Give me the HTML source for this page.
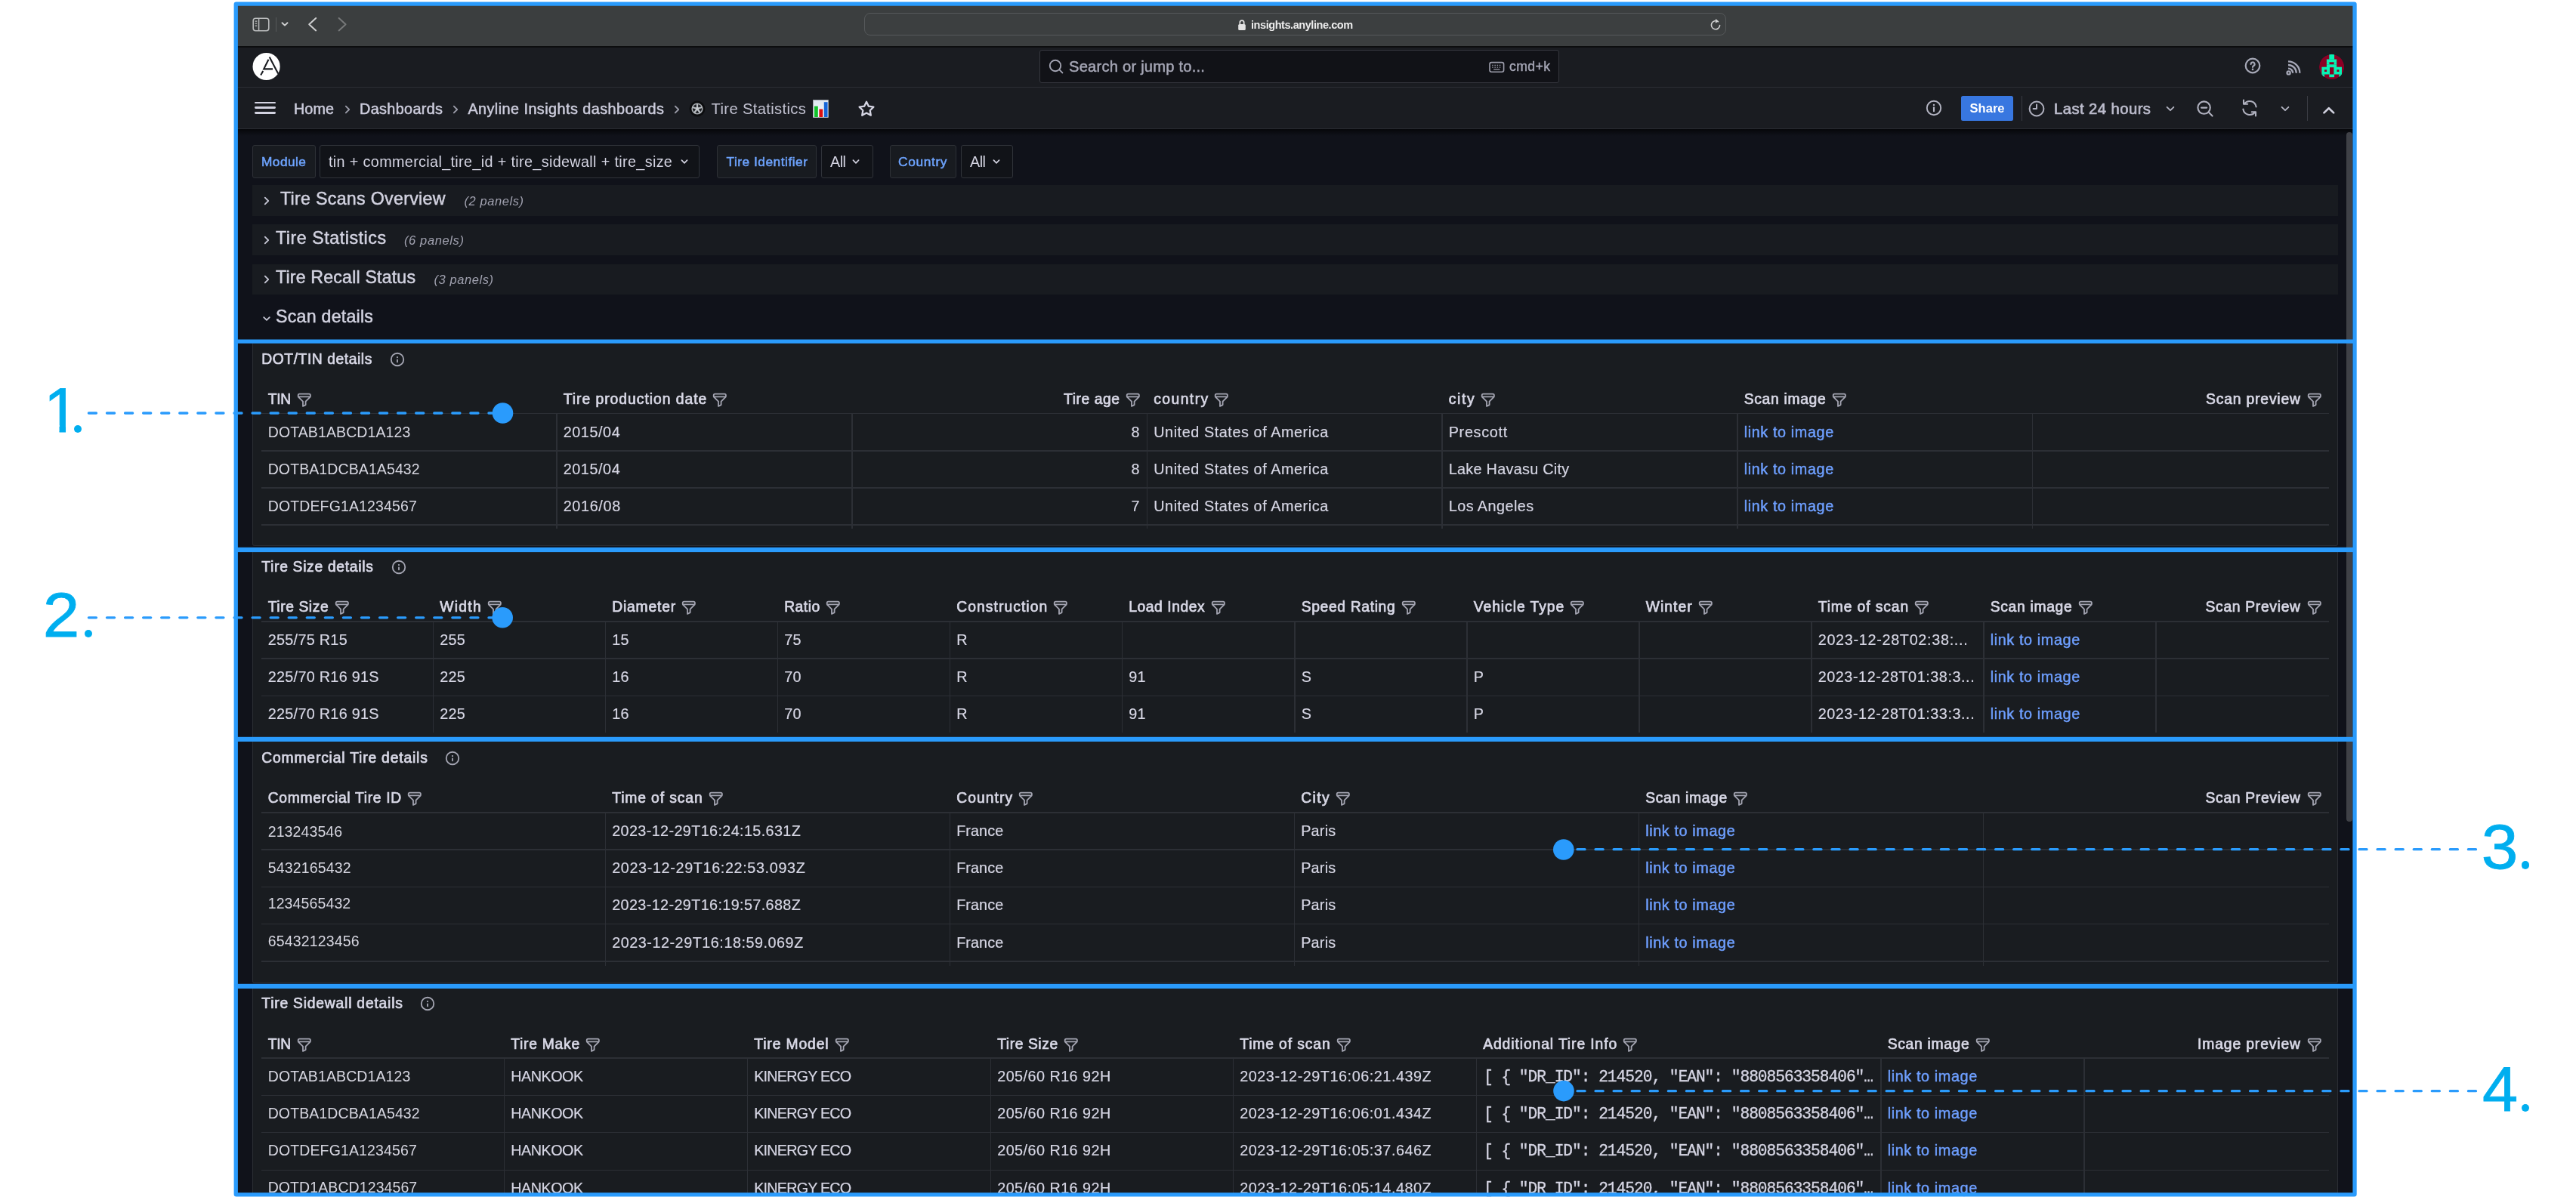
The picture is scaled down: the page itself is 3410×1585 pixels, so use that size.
<!DOCTYPE html>
<html lang="en"><head><meta charset="utf-8"><title>Tire Statistics - Anyline Insights</title>
<style>
html,body{margin:0;padding:0;background:#fff}
body{width:3410px;height:1585px;position:relative;overflow:hidden;font-family:'Liberation Sans', sans-serif}
#stage{position:absolute;left:0;top:0;width:3410px;height:1585px;overflow:hidden;will-change:transform;-webkit-font-smoothing:antialiased}
#stage>div,#stage>svg,#stage>span{position:absolute;display:block}
#stage>span{white-space:pre}
</style></head><body><div id="stage">
<div style="left:312px;top:5px;width:2805px;height:1577px;background:#10121a;"></div>
<div style="left:312px;top:5px;width:2805px;height:56px;background:#3b3e3f;"></div>
<div style="left:312px;top:61px;width:2805px;height:1.5px;background:#0c0d0e;"></div>
<div style="left:312px;top:62.5px;width:2805px;height:108px;background:#1a1c21;"></div>
<div style="left:312px;top:114.5px;width:2805px;height:1.3px;background:#2c2e34;"></div>
<div style="left:312px;top:170px;width:2805px;height:1.3px;background:#2a2c32;"></div>
<div style="left:312px;top:171.3px;width:2805px;height:9px;background:linear-gradient(#06070a,#10121a);"></div>
<div style="left:1144px;top:17px;width:1141px;height:30px;background:#3c3f40;border:1px solid #56595b;border-radius:8px;box-sizing:border-box"></div>
<svg style="left:1637px;top:24px;" width="14" height="18" viewBox="0 0 14 18"><rect x="2.2" y="8" width="9.6" height="8" rx="1.6" fill="#e4e4e4"/><path d="M4.3 8.5V5.8a2.7 2.7 0 0 1 5.4 0V8.5" fill="none" stroke="#e4e4e4" stroke-width="1.7"/></svg>
<svg style="left:2261px;top:23px;" width="20" height="20" viewBox="0 0 20 20"><path d="M15.6 10.6a5.6 5.6 0 1 1-2.2-4.9" fill="none" stroke="#d0d1d2" stroke-width="1.6" stroke-linecap="round"/><path d="M10.2 1.8l3.9 3.6-4.3 2.2z" fill="#d0d1d2"/></svg>
<svg style="left:333px;top:22px;" width="26" height="22" viewBox="0 0 26 22"><rect x="2.2" y="2.2" width="20.6" height="16.6" rx="3.2" fill="none" stroke="#b9bbbc" stroke-width="1.6"/><path d="M9.6 2.5v16" stroke="#b9bbbc" stroke-width="1.5"/><path d="M4.6 6.2h2.6M4.6 9.2h2.6M4.6 12.2h2.6" stroke="#b9bbbc" stroke-width="1.2"/></svg>
<div style="left:364.5px;top:23px;width:1px;height:19px;background:#55585a;"></div>
<svg style="left:370px;top:26px;" width="14" height="12" viewBox="0 0 14 12"><path d="M3.5 4.2l3.5 3.4 3.5-3.4" fill="none" stroke="#cfd0d1" stroke-width="1.9" stroke-linecap="round" stroke-linejoin="round"/></svg>
<svg style="left:404px;top:20px;" width="20" height="24" viewBox="0 0 20 24"><path d="M14.2 4l-9 8.2 9 8.2" fill="none" stroke="#cfd0d1" stroke-width="2" stroke-linecap="round" stroke-linejoin="round"/></svg>
<svg style="left:443px;top:20px;" width="20" height="24" viewBox="0 0 20 24"><path d="M5.6 4l9 8.2-9 8.2" fill="none" stroke="#77797a" stroke-width="2" stroke-linecap="round" stroke-linejoin="round"/></svg>
<svg style="left:334px;top:69px;" width="38" height="38" viewBox="0 0 38 38"><circle cx="18.6" cy="19" r="18.1" fill="#fff"/><g fill="none" stroke="#1a1c21" stroke-width="2.1" stroke-linecap="butt"><path d="M22.7 6.4L34.2 28.6"/><path d="M21.5 9.8L15.2 22.4H27"/><path d="M14.2 25L11.2 30.6"/></g></svg>
<div style="left:1376px;top:66px;width:688px;height:44px;background:#111217;border:1px solid #35373e;border-radius:3px;box-sizing:border-box"></div>
<svg style="left:1386px;top:76px;" width="24" height="24" viewBox="0 0 24 24"><circle cx="11" cy="11" r="7.2" fill="none" stroke="#a3a4b3" stroke-width="1.9"/><path d="M16.4 16.4l4 4" stroke="#a3a4b3" stroke-width="1.9" stroke-linecap="round"/></svg>
<svg style="left:1970px;top:78.6px;" width="24" height="20" viewBox="0 0 24 20"><rect x="2" y="3.6" width="18.6" height="12.6" rx="2.4" fill="none" stroke="#9d9eac" stroke-width="1.6"/><path d="M5.2 7.4h1.5M8.4 7.4h1.5M11.6 7.4h1.5M14.8 7.4h1.5M5.2 10.1h1.5M8.4 10.1h1.5M11.6 10.1h1.5M14.8 10.1h1.5M7.2 12.9h8.2" stroke="#9d9eac" stroke-width="1.4"/></svg>
<svg style="left:2969.8px;top:75.2px;" width="24" height="24" viewBox="0 0 24 24"><circle cx="12" cy="12" r="9.3" fill="none" stroke="#a6a8b7" stroke-width="2.2"/><path d="M9.6 9.9a2.5 2.5 0 1 1 3.5 2.3c-.8.35-1.1.8-1.1 1.7" fill="none" stroke="#a6a8b7" stroke-width="2.1" stroke-linecap="round"/><circle cx="12" cy="16.9" r="1.3" fill="#a6a8b7"/></svg>
<svg style="left:3024.8px;top:76.5px;" width="24" height="24" viewBox="0 0 24 24"><circle cx="4.6" cy="19.4" r="2.1" fill="none" stroke="#a6a8b7" stroke-width="2.2"/><path d="M4 13.6a6.2 6.2 0 0 1 6.2 6.2M4 9A10.8 10.8 0 0 1 14.8 19.8M4 4.4A15.4 15.4 0 0 1 19.4 19.8" fill="none" stroke="#a6a8b7" stroke-width="2.3" stroke-linecap="butt"/></svg>
<svg style="left:3069.7px;top:71.7px;" width="33.2" height="33.2" viewBox="0 0 33.2 33.2"><clipPath id="avc"><circle cx="16.6" cy="16.6" r="16.6"/></clipPath><g clip-path="url(#avc)"><circle cx="16.6" cy="16.6" r="16.6" fill="#8b0025"/><rect x="13.3" y="0" width="6.80" height="6.70" fill="#06f3b4"/><rect x="9.9" y="6.5" width="13.30" height="3.80" fill="#06f3b4"/><rect x="9.9" y="10.1" width="3.60" height="3.40" fill="#06f3b4"/><rect x="19.6" y="10.1" width="3.60" height="3.40" fill="#06f3b4"/><rect x="9.9" y="13.3" width="13.30" height="3.70" fill="#06f3b4"/><rect x="3.4" y="16.7" width="26.60" height="9.80" fill="#06f3b4"/><rect x="3.4" y="26.3" width="3.60" height="4.70" fill="#06f3b4"/><rect x="26.4" y="26.3" width="3.60" height="4.70" fill="#06f3b4"/><rect x="13.3" y="26.3" width="6.80" height="3.90" fill="#06f3b4"/><rect x="7.0" y="20.3" width="3.10" height="2.70" fill="#8b0025"/><rect x="23.5" y="20.3" width="2.90" height="2.70" fill="#8b0025"/><rect x="14.0" y="17.2" width="5.40" height="9.20" fill="#8b0025"/></g></svg>
<div style="left:337px;top:134.6px;width:27.5px;height:2.8px;background:#d2d2e0;border-radius:1.4px"></div>
<div style="left:337px;top:141.4px;width:27.5px;height:2.8px;background:#d2d2e0;border-radius:1.4px"></div>
<div style="left:337px;top:148.2px;width:27.5px;height:2.8px;background:#d2d2e0;border-radius:1.4px"></div>
<svg style="left:453.6px;top:137px;" width="12" height="16" viewBox="0 0 12 16"><path d="M3.8 3.6l4.4 4.4-4.4 4.4" fill="none" stroke="#9b9ca9" stroke-width="1.8" stroke-linecap="round" stroke-linejoin="round"/></svg>
<svg style="left:597px;top:137px;" width="12" height="16" viewBox="0 0 12 16"><path d="M3.8 3.6l4.4 4.4-4.4 4.4" fill="none" stroke="#9b9ca9" stroke-width="1.8" stroke-linecap="round" stroke-linejoin="round"/></svg>
<svg style="left:889.7px;top:137px;" width="12" height="16" viewBox="0 0 12 16"><path d="M3.8 3.6l4.4 4.4-4.4 4.4" fill="none" stroke="#9b9ca9" stroke-width="1.8" stroke-linecap="round" stroke-linejoin="round"/></svg>
<svg style="left:911.5px;top:133px;" width="22" height="22" viewBox="0 0 22 22"><circle cx="11" cy="11" r="10.4" fill="#0b0c0e"/><circle cx="11" cy="11" r="7.6" fill="#a9adb2"/><circle cx="11" cy="11" r="6.1" fill="#1d1f23"/><path d="M11 11V4.4M11 11l6.3-2M11 11l3.9 5.4M11 11l-3.9 5.4M11 11l-6.3-2" stroke="#b9bdc2" stroke-width="2.3"/><circle cx="11" cy="11" r="2.1" fill="#c6cace"/></svg>
<svg style="left:1075.5px;top:132px;" width="21" height="24" viewBox="0 0 21 24"><defs><linearGradient id="bg1" x1="0" y1="0" x2="0" y2="1"><stop offset="0" stop-color="#dde7f0"/><stop offset="1" stop-color="#f7f9fb"/></linearGradient></defs><rect x="0.4" y="0.4" width="20" height="23.2" fill="url(#bg1)" stroke="#aeb4ba" stroke-width="0.6"/><rect x="2" y="8.6" width="4.8" height="14.4" fill="#12c22a"/><rect x="8.4" y="12.5" width="4.8" height="10.5" fill="#dd1111"/><rect x="14.8" y="3.2" width="4.8" height="19.8" fill="#1565d8"/></svg>
<svg style="left:1135px;top:131.5px;" width="24" height="24" viewBox="0 0 24 24"><path d="M12 2.8l2.9 5.9 6.5.9-4.7 4.6 1.1 6.5L12 17.6l-5.8 3.1 1.1-6.5L2.6 9.6l6.5-.9z" fill="none" stroke="#d6d6e4" stroke-width="2.3" stroke-linejoin="round"/></svg>
<svg style="left:2548px;top:131px;" width="24" height="24" viewBox="0 0 24 24"><circle cx="12" cy="12" r="9.2" fill="none" stroke="#b4b5c3" stroke-width="1.9"/><path d="M12 11.2v5" stroke="#b4b5c3" stroke-width="2.1" stroke-linecap="round"/><circle cx="12" cy="7.9" r="1.2" fill="#b4b5c3"/></svg>
<div style="left:2596px;top:127px;width:69px;height:33px;background:#3877e0;border-radius:2.5px"></div>
<div style="left:2676px;top:127px;width:1px;height:33px;background:#3a3c43;"></div>
<svg style="left:2684px;top:131.5px;" width="24" height="24" viewBox="0 0 24 24"><circle cx="12" cy="12" r="9.4" fill="none" stroke="#b0b1bf" stroke-width="2"/><path d="M12 6.6V12H7.6" fill="none" stroke="#b0b1bf" stroke-width="2" stroke-linecap="round" stroke-linejoin="round"/></svg>
<svg style="left:2865px;top:137.5px;" width="16" height="12" viewBox="0 0 16 12"><path d="M3.5999999999999996 3.8l4.4 4.4 4.4-4.4" fill="none" stroke="#b4b5c3" stroke-width="1.8" stroke-linecap="round" stroke-linejoin="round"/></svg>
<svg style="left:2906px;top:131px;" width="26" height="26" viewBox="0 0 26 26"><circle cx="11.6" cy="11.6" r="8.2" fill="none" stroke="#b0b1bf" stroke-width="2.1"/><path d="M17.6 17.6l5 5M8 11.6h7.2" stroke="#b0b1bf" stroke-width="2.1" stroke-linecap="round"/></svg>
<svg style="left:2965px;top:130px;" width="26" height="26" viewBox="0 0 26 26"><path d="M21.6 11.4A8.8 8.8 0 0 0 6 7.4M4.4 14.6A8.8 8.8 0 0 0 20 18.6" fill="none" stroke="#b0b1bf" stroke-width="2.1" stroke-linecap="round"/><path d="M5 2.6v5.2h5.2M21 23.4v-5.2h-5.2" fill="none" stroke="#b0b1bf" stroke-width="2.1" stroke-linecap="round" stroke-linejoin="round"/></svg>
<svg style="left:3016.5px;top:137.5px;" width="16" height="12" viewBox="0 0 16 12"><path d="M3.5999999999999996 3.8l4.4 4.4 4.4-4.4" fill="none" stroke="#b4b5c3" stroke-width="1.8" stroke-linecap="round" stroke-linejoin="round"/></svg>
<div style="left:3053.5px;top:127px;width:1px;height:33px;background:#3a3c43;"></div>
<svg style="left:3072px;top:137px;" width="22" height="18" viewBox="0 0 22 18"><path d="M4.4 12.4l6.4-6.2 6.4 6.2" fill="none" stroke="#d2d2e0" stroke-width="2.6" stroke-linecap="round" stroke-linejoin="round"/></svg>
<div style="left:334px;top:192px;width:83.5px;height:43.5px;background:#181b20;border:1px solid #2d3036;border-radius:3px;box-sizing:border-box"></div>
<div style="left:423px;top:192px;width:502.5px;height:43.5px;background:#111318;border:1px solid #30333a;border-radius:3px;box-sizing:border-box"></div>
<svg style="left:897.6px;top:208px;" width="16" height="12" viewBox="0 0 16 12"><path d="M4.4 4.2l3.6 3.6 3.6-3.6" fill="none" stroke="#d0d0de" stroke-width="1.7" stroke-linecap="round" stroke-linejoin="round"/></svg>
<div style="left:948.5px;top:192px;width:132.5px;height:43.5px;background:#181b20;border:1px solid #2d3036;border-radius:3px;box-sizing:border-box"></div>
<div style="left:1087px;top:192px;width:68.5px;height:43.5px;background:#111318;border:1px solid #30333a;border-radius:3px;box-sizing:border-box"></div>
<svg style="left:1125.4px;top:208px;" width="16" height="12" viewBox="0 0 16 12"><path d="M4.4 4.2l3.6 3.6 3.6-3.6" fill="none" stroke="#d0d0de" stroke-width="1.7" stroke-linecap="round" stroke-linejoin="round"/></svg>
<div style="left:1177.5px;top:192px;width:88.5px;height:43.5px;background:#181b20;border:1px solid #2d3036;border-radius:3px;box-sizing:border-box"></div>
<div style="left:1272px;top:192px;width:68.5px;height:43.5px;background:#111318;border:1px solid #30333a;border-radius:3px;box-sizing:border-box"></div>
<svg style="left:1311px;top:208px;" width="16" height="12" viewBox="0 0 16 12"><path d="M4.4 4.2l3.6 3.6 3.6-3.6" fill="none" stroke="#d0d0de" stroke-width="1.7" stroke-linecap="round" stroke-linejoin="round"/></svg>
<div style="left:334px;top:244.5px;width:2761px;height:41px;background:#181b20;"></div>
<div style="left:334px;top:297px;width:2761px;height:40.5px;background:#181b20;"></div>
<div style="left:334px;top:349.5px;width:2761px;height:40px;background:#181b20;"></div>
<svg style="left:347px;top:258px;" width="12" height="16" viewBox="0 0 12 16"><path d="M3.8 3.6l4.4 4.4-4.4 4.4" fill="none" stroke="#c4c5d3" stroke-width="1.8" stroke-linecap="round" stroke-linejoin="round"/></svg>
<svg style="left:347px;top:310px;" width="12" height="16" viewBox="0 0 12 16"><path d="M3.8 3.6l4.4 4.4-4.4 4.4" fill="none" stroke="#c4c5d3" stroke-width="1.8" stroke-linecap="round" stroke-linejoin="round"/></svg>
<svg style="left:347px;top:362px;" width="12" height="16" viewBox="0 0 12 16"><path d="M3.8 3.6l4.4 4.4-4.4 4.4" fill="none" stroke="#c4c5d3" stroke-width="1.8" stroke-linecap="round" stroke-linejoin="round"/></svg>
<svg style="left:345px;top:416px;" width="16" height="12" viewBox="0 0 16 12"><path d="M4.2 4.1l3.8 3.8 3.8-3.8" fill="none" stroke="#c4c5d3" stroke-width="1.8" stroke-linecap="round" stroke-linejoin="round"/></svg>
<div style="left:3105.5px;top:175px;width:8.5px;height:913px;background:#3f4147;border-radius:4.5px"></div>
<div style="left:334px;top:452px;width:2761px;height:271px;background:#191c20;border:1px solid #2b2e34;border-top:none;border-radius:0 0 3px 3px;box-sizing:border-box"></div>
<svg style="left:514.6px;top:465.0px;" width="22" height="22" viewBox="0 0 24 24"><path d="M12,2A10,10,0,1,0,22,12,10.01114,10.01114,0,0,0,12,2Zm0,18a8,8,0,1,1,8-8A8.00917,8.00917,0,0,1,12,20Zm0-8.5a1,1,0,0,0-1,1v3a1,1,0,0,0,2,0v-3A1,1,0,0,0,12,11.5Zm0-4a1.25,1.25,0,1,0,1.25,1.25A1.25,1.25,0,0,0,12,7.5Z" fill="#a4a5b2"/></svg>
<div style="left:346px;top:547.0500000000001px;width:2737px;height:1.1px;background:#2c2f35;"></div>
<div style="left:346px;top:596.45px;width:2737px;height:1.1px;background:#2c2f35;"></div>
<div style="left:346px;top:645.45px;width:2737px;height:1.1px;background:#2c2f35;"></div>
<div style="left:346px;top:694.45px;width:2737px;height:1.1px;background:#2c2f35;"></div>
<div style="left:736.45px;top:547.6px;width:1.1px;height:152.89999999999998px;background:#2c2f35;"></div>
<div style="left:1127.45px;top:547.6px;width:1.1px;height:152.89999999999998px;background:#2c2f35;"></div>
<div style="left:1517.95px;top:547.6px;width:1.1px;height:152.89999999999998px;background:#2c2f35;"></div>
<div style="left:1908.45px;top:547.6px;width:1.1px;height:152.89999999999998px;background:#2c2f35;"></div>
<div style="left:2299.45px;top:547.6px;width:1.1px;height:152.89999999999998px;background:#2c2f35;"></div>
<div style="left:2689.95px;top:547.6px;width:1.1px;height:152.89999999999998px;background:#2c2f35;"></div>
<svg style="left:392.4px;top:519.0px;" width="21.6" height="21.6" viewBox="0 0 24 24"><path d="M19,2H5A3,3,0,0,0,2,5V6.17a3,3,0,0,0,.25,1.2l0,.06a2.81,2.81,0,0,0,.59.86L9,14.41V21a1,1,0,0,0,.47.85A1,1,0,0,0,10,22a1,1,0,0,0,.45-.11l4-2A1,1,0,0,0,15,19V14.41l6.12-6.12a2.81,2.81,0,0,0,.59-.86l0-.06A3,3,0,0,0,22,6.17V5A3,3,0,0,0,19,2ZM13.29,13.29A1,1,0,0,0,13,14v4.38l-2,1V14a1,1,0,0,0-.29-.71L5.41,8H18.59ZM20,6H4V5A1,1,0,0,1,5,4H19a1,1,0,0,1,1,1Z" fill="#a4a5b2"/></svg>
<svg style="left:942.4000000000001px;top:519.0px;" width="21.6" height="21.6" viewBox="0 0 24 24"><path d="M19,2H5A3,3,0,0,0,2,5V6.17a3,3,0,0,0,.25,1.2l0,.06a2.81,2.81,0,0,0,.59.86L9,14.41V21a1,1,0,0,0,.47.85A1,1,0,0,0,10,22a1,1,0,0,0,.45-.11l4-2A1,1,0,0,0,15,19V14.41l6.12-6.12a2.81,2.81,0,0,0,.59-.86l0-.06A3,3,0,0,0,22,6.17V5A3,3,0,0,0,19,2ZM13.29,13.29A1,1,0,0,0,13,14v4.38l-2,1V14a1,1,0,0,0-.29-.71L5.41,8H18.59ZM20,6H4V5A1,1,0,0,1,5,4H19a1,1,0,0,1,1,1Z" fill="#a4a5b2"/></svg>
<svg style="left:1488.7px;top:519.0px;" width="21.6" height="21.6" viewBox="0 0 24 24"><path d="M19,2H5A3,3,0,0,0,2,5V6.17a3,3,0,0,0,.25,1.2l0,.06a2.81,2.81,0,0,0,.59.86L9,14.41V21a1,1,0,0,0,.47.85A1,1,0,0,0,10,22a1,1,0,0,0,.45-.11l4-2A1,1,0,0,0,15,19V14.41l6.12-6.12a2.81,2.81,0,0,0,.59-.86l0-.06A3,3,0,0,0,22,6.17V5A3,3,0,0,0,19,2ZM13.29,13.29A1,1,0,0,0,13,14v4.38l-2,1V14a1,1,0,0,0-.29-.71L5.41,8H18.59ZM20,6H4V5A1,1,0,0,1,5,4H19a1,1,0,0,1,1,1Z" fill="#a4a5b2"/></svg>
<svg style="left:1606.4px;top:519.0px;" width="21.6" height="21.6" viewBox="0 0 24 24"><path d="M19,2H5A3,3,0,0,0,2,5V6.17a3,3,0,0,0,.25,1.2l0,.06a2.81,2.81,0,0,0,.59.86L9,14.41V21a1,1,0,0,0,.47.85A1,1,0,0,0,10,22a1,1,0,0,0,.45-.11l4-2A1,1,0,0,0,15,19V14.41l6.12-6.12a2.81,2.81,0,0,0,.59-.86l0-.06A3,3,0,0,0,22,6.17V5A3,3,0,0,0,19,2ZM13.29,13.29A1,1,0,0,0,13,14v4.38l-2,1V14a1,1,0,0,0-.29-.71L5.41,8H18.59ZM20,6H4V5A1,1,0,0,1,5,4H19a1,1,0,0,1,1,1Z" fill="#a4a5b2"/></svg>
<svg style="left:1958.9px;top:519.0px;" width="21.6" height="21.6" viewBox="0 0 24 24"><path d="M19,2H5A3,3,0,0,0,2,5V6.17a3,3,0,0,0,.25,1.2l0,.06a2.81,2.81,0,0,0,.59.86L9,14.41V21a1,1,0,0,0,.47.85A1,1,0,0,0,10,22a1,1,0,0,0,.45-.11l4-2A1,1,0,0,0,15,19V14.41l6.12-6.12a2.81,2.81,0,0,0,.59-.86l0-.06A3,3,0,0,0,22,6.17V5A3,3,0,0,0,19,2ZM13.29,13.29A1,1,0,0,0,13,14v4.38l-2,1V14a1,1,0,0,0-.29-.71L5.41,8H18.59ZM20,6H4V5A1,1,0,0,1,5,4H19a1,1,0,0,1,1,1Z" fill="#a4a5b2"/></svg>
<svg style="left:2423.8999999999996px;top:519.0px;" width="21.6" height="21.6" viewBox="0 0 24 24"><path d="M19,2H5A3,3,0,0,0,2,5V6.17a3,3,0,0,0,.25,1.2l0,.06a2.81,2.81,0,0,0,.59.86L9,14.41V21a1,1,0,0,0,.47.85A1,1,0,0,0,10,22a1,1,0,0,0,.45-.11l4-2A1,1,0,0,0,15,19V14.41l6.12-6.12a2.81,2.81,0,0,0,.59-.86l0-.06A3,3,0,0,0,22,6.17V5A3,3,0,0,0,19,2ZM13.29,13.29A1,1,0,0,0,13,14v4.38l-2,1V14a1,1,0,0,0-.29-.71L5.41,8H18.59ZM20,6H4V5A1,1,0,0,1,5,4H19a1,1,0,0,1,1,1Z" fill="#a4a5b2"/></svg>
<svg style="left:3052.7px;top:519.0px;" width="21.6" height="21.6" viewBox="0 0 24 24"><path d="M19,2H5A3,3,0,0,0,2,5V6.17a3,3,0,0,0,.25,1.2l0,.06a2.81,2.81,0,0,0,.59.86L9,14.41V21a1,1,0,0,0,.47.85A1,1,0,0,0,10,22a1,1,0,0,0,.45-.11l4-2A1,1,0,0,0,15,19V14.41l6.12-6.12a2.81,2.81,0,0,0,.59-.86l0-.06A3,3,0,0,0,22,6.17V5A3,3,0,0,0,19,2ZM13.29,13.29A1,1,0,0,0,13,14v4.38l-2,1V14a1,1,0,0,0-.29-.71L5.41,8H18.59ZM20,6H4V5A1,1,0,0,1,5,4H19a1,1,0,0,1,1,1Z" fill="#a4a5b2"/></svg>
<div style="left:334px;top:728px;width:2761px;height:251px;background:#191c20;border:1px solid #2b2e34;border-top:none;border-radius:0;box-sizing:border-box"></div>
<svg style="left:516.5px;top:740.0px;" width="22" height="22" viewBox="0 0 24 24"><path d="M12,2A10,10,0,1,0,22,12,10.01114,10.01114,0,0,0,12,2Zm0,18a8,8,0,1,1,8-8A8.00917,8.00917,0,0,1,12,20Zm0-8.5a1,1,0,0,0-1,1v3a1,1,0,0,0,2,0v-3A1,1,0,0,0,12,11.5Zm0-4a1.25,1.25,0,1,0,1.25,1.25A1.25,1.25,0,0,0,12,7.5Z" fill="#a4a5b2"/></svg>
<div style="left:346px;top:822.45px;width:2737px;height:1.1px;background:#2c2f35;"></div>
<div style="left:346px;top:871.45px;width:2737px;height:1.1px;background:#2c2f35;"></div>
<div style="left:346px;top:920.95px;width:2737px;height:1.1px;background:#2c2f35;"></div>
<div style="left:572.95px;top:823px;width:1.1px;height:147px;background:#2c2f35;"></div>
<div style="left:800.95px;top:823px;width:1.1px;height:147px;background:#2c2f35;"></div>
<div style="left:1028.95px;top:823px;width:1.1px;height:147px;background:#2c2f35;"></div>
<div style="left:1256.95px;top:823px;width:1.1px;height:147px;background:#2c2f35;"></div>
<div style="left:1484.95px;top:823px;width:1.1px;height:147px;background:#2c2f35;"></div>
<div style="left:1713.45px;top:823px;width:1.1px;height:147px;background:#2c2f35;"></div>
<div style="left:1941.45px;top:823px;width:1.1px;height:147px;background:#2c2f35;"></div>
<div style="left:2169.45px;top:823px;width:1.1px;height:147px;background:#2c2f35;"></div>
<div style="left:2397.45px;top:823px;width:1.1px;height:147px;background:#2c2f35;"></div>
<div style="left:2625.45px;top:823px;width:1.1px;height:147px;background:#2c2f35;"></div>
<div style="left:2853.45px;top:823px;width:1.1px;height:147px;background:#2c2f35;"></div>
<svg style="left:441.9px;top:794.0px;" width="21.6" height="21.6" viewBox="0 0 24 24"><path d="M19,2H5A3,3,0,0,0,2,5V6.17a3,3,0,0,0,.25,1.2l0,.06a2.81,2.81,0,0,0,.59.86L9,14.41V21a1,1,0,0,0,.47.85A1,1,0,0,0,10,22a1,1,0,0,0,.45-.11l4-2A1,1,0,0,0,15,19V14.41l6.12-6.12a2.81,2.81,0,0,0,.59-.86l0-.06A3,3,0,0,0,22,6.17V5A3,3,0,0,0,19,2ZM13.29,13.29A1,1,0,0,0,13,14v4.38l-2,1V14a1,1,0,0,0-.29-.71L5.41,8H18.59ZM20,6H4V5A1,1,0,0,1,5,4H19a1,1,0,0,1,1,1Z" fill="#a4a5b2"/></svg>
<svg style="left:643.9000000000001px;top:794.0px;" width="21.6" height="21.6" viewBox="0 0 24 24"><path d="M19,2H5A3,3,0,0,0,2,5V6.17a3,3,0,0,0,.25,1.2l0,.06a2.81,2.81,0,0,0,.59.86L9,14.41V21a1,1,0,0,0,.47.85A1,1,0,0,0,10,22a1,1,0,0,0,.45-.11l4-2A1,1,0,0,0,15,19V14.41l6.12-6.12a2.81,2.81,0,0,0,.59-.86l0-.06A3,3,0,0,0,22,6.17V5A3,3,0,0,0,19,2ZM13.29,13.29A1,1,0,0,0,13,14v4.38l-2,1V14a1,1,0,0,0-.29-.71L5.41,8H18.59ZM20,6H4V5A1,1,0,0,1,5,4H19a1,1,0,0,1,1,1Z" fill="#a4a5b2"/></svg>
<svg style="left:901.4000000000001px;top:794.0px;" width="21.6" height="21.6" viewBox="0 0 24 24"><path d="M19,2H5A3,3,0,0,0,2,5V6.17a3,3,0,0,0,.25,1.2l0,.06a2.81,2.81,0,0,0,.59.86L9,14.41V21a1,1,0,0,0,.47.85A1,1,0,0,0,10,22a1,1,0,0,0,.45-.11l4-2A1,1,0,0,0,15,19V14.41l6.12-6.12a2.81,2.81,0,0,0,.59-.86l0-.06A3,3,0,0,0,22,6.17V5A3,3,0,0,0,19,2ZM13.29,13.29A1,1,0,0,0,13,14v4.38l-2,1V14a1,1,0,0,0-.29-.71L5.41,8H18.59ZM20,6H4V5A1,1,0,0,1,5,4H19a1,1,0,0,1,1,1Z" fill="#a4a5b2"/></svg>
<svg style="left:1092.4px;top:794.0px;" width="21.6" height="21.6" viewBox="0 0 24 24"><path d="M19,2H5A3,3,0,0,0,2,5V6.17a3,3,0,0,0,.25,1.2l0,.06a2.81,2.81,0,0,0,.59.86L9,14.41V21a1,1,0,0,0,.47.85A1,1,0,0,0,10,22a1,1,0,0,0,.45-.11l4-2A1,1,0,0,0,15,19V14.41l6.12-6.12a2.81,2.81,0,0,0,.59-.86l0-.06A3,3,0,0,0,22,6.17V5A3,3,0,0,0,19,2ZM13.29,13.29A1,1,0,0,0,13,14v4.38l-2,1V14a1,1,0,0,0-.29-.71L5.41,8H18.59ZM20,6H4V5A1,1,0,0,1,5,4H19a1,1,0,0,1,1,1Z" fill="#a4a5b2"/></svg>
<svg style="left:1393.4px;top:794.0px;" width="21.6" height="21.6" viewBox="0 0 24 24"><path d="M19,2H5A3,3,0,0,0,2,5V6.17a3,3,0,0,0,.25,1.2l0,.06a2.81,2.81,0,0,0,.59.86L9,14.41V21a1,1,0,0,0,.47.85A1,1,0,0,0,10,22a1,1,0,0,0,.45-.11l4-2A1,1,0,0,0,15,19V14.41l6.12-6.12a2.81,2.81,0,0,0,.59-.86l0-.06A3,3,0,0,0,22,6.17V5A3,3,0,0,0,19,2ZM13.29,13.29A1,1,0,0,0,13,14v4.38l-2,1V14a1,1,0,0,0-.29-.71L5.41,8H18.59ZM20,6H4V5A1,1,0,0,1,5,4H19a1,1,0,0,1,1,1Z" fill="#a4a5b2"/></svg>
<svg style="left:1601.9px;top:794.0px;" width="21.6" height="21.6" viewBox="0 0 24 24"><path d="M19,2H5A3,3,0,0,0,2,5V6.17a3,3,0,0,0,.25,1.2l0,.06a2.81,2.81,0,0,0,.59.86L9,14.41V21a1,1,0,0,0,.47.85A1,1,0,0,0,10,22a1,1,0,0,0,.45-.11l4-2A1,1,0,0,0,15,19V14.41l6.12-6.12a2.81,2.81,0,0,0,.59-.86l0-.06A3,3,0,0,0,22,6.17V5A3,3,0,0,0,19,2ZM13.29,13.29A1,1,0,0,0,13,14v4.38l-2,1V14a1,1,0,0,0-.29-.71L5.41,8H18.59ZM20,6H4V5A1,1,0,0,1,5,4H19a1,1,0,0,1,1,1Z" fill="#a4a5b2"/></svg>
<svg style="left:1853.9px;top:794.0px;" width="21.6" height="21.6" viewBox="0 0 24 24"><path d="M19,2H5A3,3,0,0,0,2,5V6.17a3,3,0,0,0,.25,1.2l0,.06a2.81,2.81,0,0,0,.59.86L9,14.41V21a1,1,0,0,0,.47.85A1,1,0,0,0,10,22a1,1,0,0,0,.45-.11l4-2A1,1,0,0,0,15,19V14.41l6.12-6.12a2.81,2.81,0,0,0,.59-.86l0-.06A3,3,0,0,0,22,6.17V5A3,3,0,0,0,19,2ZM13.29,13.29A1,1,0,0,0,13,14v4.38l-2,1V14a1,1,0,0,0-.29-.71L5.41,8H18.59ZM20,6H4V5A1,1,0,0,1,5,4H19a1,1,0,0,1,1,1Z" fill="#a4a5b2"/></svg>
<svg style="left:2077.3999999999996px;top:794.0px;" width="21.6" height="21.6" viewBox="0 0 24 24"><path d="M19,2H5A3,3,0,0,0,2,5V6.17a3,3,0,0,0,.25,1.2l0,.06a2.81,2.81,0,0,0,.59.86L9,14.41V21a1,1,0,0,0,.47.85A1,1,0,0,0,10,22a1,1,0,0,0,.45-.11l4-2A1,1,0,0,0,15,19V14.41l6.12-6.12a2.81,2.81,0,0,0,.59-.86l0-.06A3,3,0,0,0,22,6.17V5A3,3,0,0,0,19,2ZM13.29,13.29A1,1,0,0,0,13,14v4.38l-2,1V14a1,1,0,0,0-.29-.71L5.41,8H18.59ZM20,6H4V5A1,1,0,0,1,5,4H19a1,1,0,0,1,1,1Z" fill="#a4a5b2"/></svg>
<svg style="left:2246.8999999999996px;top:794.0px;" width="21.6" height="21.6" viewBox="0 0 24 24"><path d="M19,2H5A3,3,0,0,0,2,5V6.17a3,3,0,0,0,.25,1.2l0,.06a2.81,2.81,0,0,0,.59.86L9,14.41V21a1,1,0,0,0,.47.85A1,1,0,0,0,10,22a1,1,0,0,0,.45-.11l4-2A1,1,0,0,0,15,19V14.41l6.12-6.12a2.81,2.81,0,0,0,.59-.86l0-.06A3,3,0,0,0,22,6.17V5A3,3,0,0,0,19,2ZM13.29,13.29A1,1,0,0,0,13,14v4.38l-2,1V14a1,1,0,0,0-.29-.71L5.41,8H18.59ZM20,6H4V5A1,1,0,0,1,5,4H19a1,1,0,0,1,1,1Z" fill="#a4a5b2"/></svg>
<svg style="left:2533.3999999999996px;top:794.0px;" width="21.6" height="21.6" viewBox="0 0 24 24"><path d="M19,2H5A3,3,0,0,0,2,5V6.17a3,3,0,0,0,.25,1.2l0,.06a2.81,2.81,0,0,0,.59.86L9,14.41V21a1,1,0,0,0,.47.85A1,1,0,0,0,10,22a1,1,0,0,0,.45-.11l4-2A1,1,0,0,0,15,19V14.41l6.12-6.12a2.81,2.81,0,0,0,.59-.86l0-.06A3,3,0,0,0,22,6.17V5A3,3,0,0,0,19,2ZM13.29,13.29A1,1,0,0,0,13,14v4.38l-2,1V14a1,1,0,0,0-.29-.71L5.41,8H18.59ZM20,6H4V5A1,1,0,0,1,5,4H19a1,1,0,0,1,1,1Z" fill="#a4a5b2"/></svg>
<svg style="left:2749.8999999999996px;top:794.0px;" width="21.6" height="21.6" viewBox="0 0 24 24"><path d="M19,2H5A3,3,0,0,0,2,5V6.17a3,3,0,0,0,.25,1.2l0,.06a2.81,2.81,0,0,0,.59.86L9,14.41V21a1,1,0,0,0,.47.85A1,1,0,0,0,10,22a1,1,0,0,0,.45-.11l4-2A1,1,0,0,0,15,19V14.41l6.12-6.12a2.81,2.81,0,0,0,.59-.86l0-.06A3,3,0,0,0,22,6.17V5A3,3,0,0,0,19,2ZM13.29,13.29A1,1,0,0,0,13,14v4.38l-2,1V14a1,1,0,0,0-.29-.71L5.41,8H18.59ZM20,6H4V5A1,1,0,0,1,5,4H19a1,1,0,0,1,1,1Z" fill="#a4a5b2"/></svg>
<svg style="left:3052.7px;top:794.0px;" width="21.6" height="21.6" viewBox="0 0 24 24"><path d="M19,2H5A3,3,0,0,0,2,5V6.17a3,3,0,0,0,.25,1.2l0,.06a2.81,2.81,0,0,0,.59.86L9,14.41V21a1,1,0,0,0,.47.85A1,1,0,0,0,10,22a1,1,0,0,0,.45-.11l4-2A1,1,0,0,0,15,19V14.41l6.12-6.12a2.81,2.81,0,0,0,.59-.86l0-.06A3,3,0,0,0,22,6.17V5A3,3,0,0,0,19,2ZM13.29,13.29A1,1,0,0,0,13,14v4.38l-2,1V14a1,1,0,0,0-.29-.71L5.41,8H18.59ZM20,6H4V5A1,1,0,0,1,5,4H19a1,1,0,0,1,1,1Z" fill="#a4a5b2"/></svg>
<div style="left:334px;top:979px;width:2761px;height:322.5px;background:#191c20;border:1px solid #2b2e34;border-top:none;border-radius:0 0 3px 3px;box-sizing:border-box"></div>
<svg style="left:588.0px;top:993.0px;" width="22" height="22" viewBox="0 0 24 24"><path d="M12,2A10,10,0,1,0,22,12,10.01114,10.01114,0,0,0,12,2Zm0,18a8,8,0,1,1,8-8A8.00917,8.00917,0,0,1,12,20Zm0-8.5a1,1,0,0,0-1,1v3a1,1,0,0,0,2,0v-3A1,1,0,0,0,12,11.5Zm0-4a1.25,1.25,0,1,0,1.25,1.25A1.25,1.25,0,0,0,12,7.5Z" fill="#a4a5b2"/></svg>
<div style="left:346px;top:1075.45px;width:2737px;height:1.1px;background:#2c2f35;"></div>
<div style="left:346px;top:1124.45px;width:2737px;height:1.1px;background:#2c2f35;"></div>
<div style="left:346px;top:1173.95px;width:2737px;height:1.1px;background:#2c2f35;"></div>
<div style="left:346px;top:1222.95px;width:2737px;height:1.1px;background:#2c2f35;"></div>
<div style="left:346px;top:1272.45px;width:2737px;height:1.1px;background:#2c2f35;"></div>
<div style="left:800.95px;top:1076px;width:1.1px;height:202.5px;background:#2c2f35;"></div>
<div style="left:1256.95px;top:1076px;width:1.1px;height:202.5px;background:#2c2f35;"></div>
<div style="left:1712.95px;top:1076px;width:1.1px;height:202.5px;background:#2c2f35;"></div>
<div style="left:2168.95px;top:1076px;width:1.1px;height:202.5px;background:#2c2f35;"></div>
<div style="left:2624.95px;top:1076px;width:1.1px;height:202.5px;background:#2c2f35;"></div>
<svg style="left:538.4000000000001px;top:1046.6px;" width="21.6" height="21.6" viewBox="0 0 24 24"><path d="M19,2H5A3,3,0,0,0,2,5V6.17a3,3,0,0,0,.25,1.2l0,.06a2.81,2.81,0,0,0,.59.86L9,14.41V21a1,1,0,0,0,.47.85A1,1,0,0,0,10,22a1,1,0,0,0,.45-.11l4-2A1,1,0,0,0,15,19V14.41l6.12-6.12a2.81,2.81,0,0,0,.59-.86l0-.06A3,3,0,0,0,22,6.17V5A3,3,0,0,0,19,2ZM13.29,13.29A1,1,0,0,0,13,14v4.38l-2,1V14a1,1,0,0,0-.29-.71L5.41,8H18.59ZM20,6H4V5A1,1,0,0,1,5,4H19a1,1,0,0,1,1,1Z" fill="#a4a5b2"/></svg>
<svg style="left:936.9000000000001px;top:1046.6px;" width="21.6" height="21.6" viewBox="0 0 24 24"><path d="M19,2H5A3,3,0,0,0,2,5V6.17a3,3,0,0,0,.25,1.2l0,.06a2.81,2.81,0,0,0,.59.86L9,14.41V21a1,1,0,0,0,.47.85A1,1,0,0,0,10,22a1,1,0,0,0,.45-.11l4-2A1,1,0,0,0,15,19V14.41l6.12-6.12a2.81,2.81,0,0,0,.59-.86l0-.06A3,3,0,0,0,22,6.17V5A3,3,0,0,0,19,2ZM13.29,13.29A1,1,0,0,0,13,14v4.38l-2,1V14a1,1,0,0,0-.29-.71L5.41,8H18.59ZM20,6H4V5A1,1,0,0,1,5,4H19a1,1,0,0,1,1,1Z" fill="#a4a5b2"/></svg>
<svg style="left:1347.4px;top:1046.6px;" width="21.6" height="21.6" viewBox="0 0 24 24"><path d="M19,2H5A3,3,0,0,0,2,5V6.17a3,3,0,0,0,.25,1.2l0,.06a2.81,2.81,0,0,0,.59.86L9,14.41V21a1,1,0,0,0,.47.85A1,1,0,0,0,10,22a1,1,0,0,0,.45-.11l4-2A1,1,0,0,0,15,19V14.41l6.12-6.12a2.81,2.81,0,0,0,.59-.86l0-.06A3,3,0,0,0,22,6.17V5A3,3,0,0,0,19,2ZM13.29,13.29A1,1,0,0,0,13,14v4.38l-2,1V14a1,1,0,0,0-.29-.71L5.41,8H18.59ZM20,6H4V5A1,1,0,0,1,5,4H19a1,1,0,0,1,1,1Z" fill="#a4a5b2"/></svg>
<svg style="left:1766.9px;top:1046.6px;" width="21.6" height="21.6" viewBox="0 0 24 24"><path d="M19,2H5A3,3,0,0,0,2,5V6.17a3,3,0,0,0,.25,1.2l0,.06a2.81,2.81,0,0,0,.59.86L9,14.41V21a1,1,0,0,0,.47.85A1,1,0,0,0,10,22a1,1,0,0,0,.45-.11l4-2A1,1,0,0,0,15,19V14.41l6.12-6.12a2.81,2.81,0,0,0,.59-.86l0-.06A3,3,0,0,0,22,6.17V5A3,3,0,0,0,19,2ZM13.29,13.29A1,1,0,0,0,13,14v4.38l-2,1V14a1,1,0,0,0-.29-.71L5.41,8H18.59ZM20,6H4V5A1,1,0,0,1,5,4H19a1,1,0,0,1,1,1Z" fill="#a4a5b2"/></svg>
<svg style="left:2293.3999999999996px;top:1046.6px;" width="21.6" height="21.6" viewBox="0 0 24 24"><path d="M19,2H5A3,3,0,0,0,2,5V6.17a3,3,0,0,0,.25,1.2l0,.06a2.81,2.81,0,0,0,.59.86L9,14.41V21a1,1,0,0,0,.47.85A1,1,0,0,0,10,22a1,1,0,0,0,.45-.11l4-2A1,1,0,0,0,15,19V14.41l6.12-6.12a2.81,2.81,0,0,0,.59-.86l0-.06A3,3,0,0,0,22,6.17V5A3,3,0,0,0,19,2ZM13.29,13.29A1,1,0,0,0,13,14v4.38l-2,1V14a1,1,0,0,0-.29-.71L5.41,8H18.59ZM20,6H4V5A1,1,0,0,1,5,4H19a1,1,0,0,1,1,1Z" fill="#a4a5b2"/></svg>
<svg style="left:3052.7px;top:1046.6px;" width="21.6" height="21.6" viewBox="0 0 24 24"><path d="M19,2H5A3,3,0,0,0,2,5V6.17a3,3,0,0,0,.25,1.2l0,.06a2.81,2.81,0,0,0,.59.86L9,14.41V21a1,1,0,0,0,.47.85A1,1,0,0,0,10,22a1,1,0,0,0,.45-.11l4-2A1,1,0,0,0,15,19V14.41l6.12-6.12a2.81,2.81,0,0,0,.59-.86l0-.06A3,3,0,0,0,22,6.17V5A3,3,0,0,0,19,2ZM13.29,13.29A1,1,0,0,0,13,14v4.38l-2,1V14a1,1,0,0,0-.29-.71L5.41,8H18.59ZM20,6H4V5A1,1,0,0,1,5,4H19a1,1,0,0,1,1,1Z" fill="#a4a5b2"/></svg>
<div style="left:334px;top:1306px;width:2761px;height:277px;background:#191c20;border:1px solid #2b2e34;border-top:none;border-radius:0;box-sizing:border-box"></div>
<svg style="left:555.0px;top:1318.0px;" width="22" height="22" viewBox="0 0 24 24"><path d="M12,2A10,10,0,1,0,22,12,10.01114,10.01114,0,0,0,12,2Zm0,18a8,8,0,1,1,8-8A8.00917,8.00917,0,0,1,12,20Zm0-8.5a1,1,0,0,0-1,1v3a1,1,0,0,0,2,0v-3A1,1,0,0,0,12,11.5Zm0-4a1.25,1.25,0,1,0,1.25,1.25A1.25,1.25,0,0,0,12,7.5Z" fill="#a4a5b2"/></svg>
<div style="left:346px;top:1400.45px;width:2737px;height:1.1px;background:#2c2f35;"></div>
<div style="left:346px;top:1449.95px;width:2737px;height:1.1px;background:#2c2f35;"></div>
<div style="left:346px;top:1498.95px;width:2737px;height:1.1px;background:#2c2f35;"></div>
<div style="left:346px;top:1548.75px;width:2737px;height:1.1px;background:#2c2f35;"></div>
<div style="left:666.95px;top:1401px;width:1.1px;height:182px;background:#2c2f35;"></div>
<div style="left:988.95px;top:1401px;width:1.1px;height:182px;background:#2c2f35;"></div>
<div style="left:1310.95px;top:1401px;width:1.1px;height:182px;background:#2c2f35;"></div>
<div style="left:1631.95px;top:1401px;width:1.1px;height:182px;background:#2c2f35;"></div>
<div style="left:1953.95px;top:1401px;width:1.1px;height:182px;background:#2c2f35;"></div>
<div style="left:2489.45px;top:1401px;width:1.1px;height:182px;background:#2c2f35;"></div>
<div style="left:2758.45px;top:1401px;width:1.1px;height:182px;background:#2c2f35;"></div>
<svg style="left:392.4px;top:1372.5px;" width="21.6" height="21.6" viewBox="0 0 24 24"><path d="M19,2H5A3,3,0,0,0,2,5V6.17a3,3,0,0,0,.25,1.2l0,.06a2.81,2.81,0,0,0,.59.86L9,14.41V21a1,1,0,0,0,.47.85A1,1,0,0,0,10,22a1,1,0,0,0,.45-.11l4-2A1,1,0,0,0,15,19V14.41l6.12-6.12a2.81,2.81,0,0,0,.59-.86l0-.06A3,3,0,0,0,22,6.17V5A3,3,0,0,0,19,2ZM13.29,13.29A1,1,0,0,0,13,14v4.38l-2,1V14a1,1,0,0,0-.29-.71L5.41,8H18.59ZM20,6H4V5A1,1,0,0,1,5,4H19a1,1,0,0,1,1,1Z" fill="#a4a5b2"/></svg>
<svg style="left:774.4000000000001px;top:1372.5px;" width="21.6" height="21.6" viewBox="0 0 24 24"><path d="M19,2H5A3,3,0,0,0,2,5V6.17a3,3,0,0,0,.25,1.2l0,.06a2.81,2.81,0,0,0,.59.86L9,14.41V21a1,1,0,0,0,.47.85A1,1,0,0,0,10,22a1,1,0,0,0,.45-.11l4-2A1,1,0,0,0,15,19V14.41l6.12-6.12a2.81,2.81,0,0,0,.59-.86l0-.06A3,3,0,0,0,22,6.17V5A3,3,0,0,0,19,2ZM13.29,13.29A1,1,0,0,0,13,14v4.38l-2,1V14a1,1,0,0,0-.29-.71L5.41,8H18.59ZM20,6H4V5A1,1,0,0,1,5,4H19a1,1,0,0,1,1,1Z" fill="#a4a5b2"/></svg>
<svg style="left:1103.9px;top:1372.5px;" width="21.6" height="21.6" viewBox="0 0 24 24"><path d="M19,2H5A3,3,0,0,0,2,5V6.17a3,3,0,0,0,.25,1.2l0,.06a2.81,2.81,0,0,0,.59.86L9,14.41V21a1,1,0,0,0,.47.85A1,1,0,0,0,10,22a1,1,0,0,0,.45-.11l4-2A1,1,0,0,0,15,19V14.41l6.12-6.12a2.81,2.81,0,0,0,.59-.86l0-.06A3,3,0,0,0,22,6.17V5A3,3,0,0,0,19,2ZM13.29,13.29A1,1,0,0,0,13,14v4.38l-2,1V14a1,1,0,0,0-.29-.71L5.41,8H18.59ZM20,6H4V5A1,1,0,0,1,5,4H19a1,1,0,0,1,1,1Z" fill="#a4a5b2"/></svg>
<svg style="left:1407.4px;top:1372.5px;" width="21.6" height="21.6" viewBox="0 0 24 24"><path d="M19,2H5A3,3,0,0,0,2,5V6.17a3,3,0,0,0,.25,1.2l0,.06a2.81,2.81,0,0,0,.59.86L9,14.41V21a1,1,0,0,0,.47.85A1,1,0,0,0,10,22a1,1,0,0,0,.45-.11l4-2A1,1,0,0,0,15,19V14.41l6.12-6.12a2.81,2.81,0,0,0,.59-.86l0-.06A3,3,0,0,0,22,6.17V5A3,3,0,0,0,19,2ZM13.29,13.29A1,1,0,0,0,13,14v4.38l-2,1V14a1,1,0,0,0-.29-.71L5.41,8H18.59ZM20,6H4V5A1,1,0,0,1,5,4H19a1,1,0,0,1,1,1Z" fill="#a4a5b2"/></svg>
<svg style="left:1767.9px;top:1372.5px;" width="21.6" height="21.6" viewBox="0 0 24 24"><path d="M19,2H5A3,3,0,0,0,2,5V6.17a3,3,0,0,0,.25,1.2l0,.06a2.81,2.81,0,0,0,.59.86L9,14.41V21a1,1,0,0,0,.47.85A1,1,0,0,0,10,22a1,1,0,0,0,.45-.11l4-2A1,1,0,0,0,15,19V14.41l6.12-6.12a2.81,2.81,0,0,0,.59-.86l0-.06A3,3,0,0,0,22,6.17V5A3,3,0,0,0,19,2ZM13.29,13.29A1,1,0,0,0,13,14v4.38l-2,1V14a1,1,0,0,0-.29-.71L5.41,8H18.59ZM20,6H4V5A1,1,0,0,1,5,4H19a1,1,0,0,1,1,1Z" fill="#a4a5b2"/></svg>
<svg style="left:2147.3999999999996px;top:1372.5px;" width="21.6" height="21.6" viewBox="0 0 24 24"><path d="M19,2H5A3,3,0,0,0,2,5V6.17a3,3,0,0,0,.25,1.2l0,.06a2.81,2.81,0,0,0,.59.86L9,14.41V21a1,1,0,0,0,.47.85A1,1,0,0,0,10,22a1,1,0,0,0,.45-.11l4-2A1,1,0,0,0,15,19V14.41l6.12-6.12a2.81,2.81,0,0,0,.59-.86l0-.06A3,3,0,0,0,22,6.17V5A3,3,0,0,0,19,2ZM13.29,13.29A1,1,0,0,0,13,14v4.38l-2,1V14a1,1,0,0,0-.29-.71L5.41,8H18.59ZM20,6H4V5A1,1,0,0,1,5,4H19a1,1,0,0,1,1,1Z" fill="#a4a5b2"/></svg>
<svg style="left:2613.8999999999996px;top:1372.5px;" width="21.6" height="21.6" viewBox="0 0 24 24"><path d="M19,2H5A3,3,0,0,0,2,5V6.17a3,3,0,0,0,.25,1.2l0,.06a2.81,2.81,0,0,0,.59.86L9,14.41V21a1,1,0,0,0,.47.85A1,1,0,0,0,10,22a1,1,0,0,0,.45-.11l4-2A1,1,0,0,0,15,19V14.41l6.12-6.12a2.81,2.81,0,0,0,.59-.86l0-.06A3,3,0,0,0,22,6.17V5A3,3,0,0,0,19,2ZM13.29,13.29A1,1,0,0,0,13,14v4.38l-2,1V14a1,1,0,0,0-.29-.71L5.41,8H18.59ZM20,6H4V5A1,1,0,0,1,5,4H19a1,1,0,0,1,1,1Z" fill="#a4a5b2"/></svg>
<svg style="left:3052.7px;top:1372.5px;" width="21.6" height="21.6" viewBox="0 0 24 24"><path d="M19,2H5A3,3,0,0,0,2,5V6.17a3,3,0,0,0,.25,1.2l0,.06a2.81,2.81,0,0,0,.59.86L9,14.41V21a1,1,0,0,0,.47.85A1,1,0,0,0,10,22a1,1,0,0,0,.45-.11l4-2A1,1,0,0,0,15,19V14.41l6.12-6.12a2.81,2.81,0,0,0,.59-.86l0-.06A3,3,0,0,0,22,6.17V5A3,3,0,0,0,19,2ZM13.29,13.29A1,1,0,0,0,13,14v4.38l-2,1V14a1,1,0,0,0-.29-.71L5.41,8H18.59ZM20,6H4V5A1,1,0,0,1,5,4H19a1,1,0,0,1,1,1Z" fill="#a4a5b2"/></svg>
<span style="left:1656.0px;top:23.5px;font-size:14.5px;line-height:19px;color:#ececec;letter-spacing:-0.44px;font-weight:700">insights.anyline.com</span>
<span style="left:1415.0px;top:75.0px;font-size:20.2px;line-height:26px;color:#a6a7b6;letter-spacing:0.20px;-webkit-text-stroke:0.45px #a6a7b6">Search or jump to...</span>
<span style="left:1998.0px;top:77.0px;font-size:17.6px;line-height:23px;color:#a6a7b6;letter-spacing:0.42px;-webkit-text-stroke:0.4px #a6a7b6">cmd+k</span>
<span style="left:389.0px;top:130.5px;font-size:19.8px;line-height:26px;color:#ccccdc;letter-spacing:0.07px;-webkit-text-stroke:0.5px #ccccdc">Home</span>
<span style="left:476.0px;top:130.5px;font-size:19.8px;line-height:26px;color:#ccccdc;letter-spacing:0.37px;-webkit-text-stroke:0.5px #ccccdc">Dashboards</span>
<span style="left:619.4px;top:130.5px;font-size:19.8px;line-height:26px;color:#ccccdc;letter-spacing:0.46px;-webkit-text-stroke:0.5px #ccccdc">Anyline Insights dashboards</span>
<span style="left:941.6px;top:130.5px;font-size:20.2px;line-height:26px;color:#c3c3d2;letter-spacing:0.34px">Tire Statistics</span>
<span style="left:2607.5px;top:133.0px;font-size:16.5px;line-height:21px;color:#fff;letter-spacing:0.04px;font-weight:700">Share</span>
<span style="left:2719.0px;top:130.5px;font-size:20.2px;line-height:26px;color:#bbbbcb;letter-spacing:0.47px;-webkit-text-stroke:0.7px #bbbbcb">Last 24 hours</span>
<span style="left:346.0px;top:202.5px;font-size:17.3px;line-height:22px;color:#6ea4ff;letter-spacing:0.46px;-webkit-text-stroke:0.5px #6ea4ff">Module</span>
<span style="left:435.0px;top:201.0px;font-size:19.8px;line-height:26px;color:#d4d4e2;letter-spacing:0.35px">tin + commercial_tire_id + tire_sidewall + tire_size</span>
<span style="left:961.5px;top:202.5px;font-size:17.3px;line-height:22px;color:#6ea4ff;letter-spacing:0.52px;-webkit-text-stroke:0.5px #6ea4ff">Tire Identifier</span>
<span style="left:1099.0px;top:201.0px;font-size:19.8px;line-height:26px;color:#d4d4e2;letter-spacing:-0.49px">All</span>
<span style="left:1189.0px;top:202.5px;font-size:17.3px;line-height:22px;color:#6ea4ff;letter-spacing:0.66px;-webkit-text-stroke:0.5px #6ea4ff">Country</span>
<span style="left:1284.0px;top:201.0px;font-size:19.8px;line-height:26px;color:#d4d4e2;letter-spacing:-0.49px">All</span>
<span style="left:371.0px;top:247.6px;font-size:23.2px;line-height:30px;color:#d2d2e0;letter-spacing:0.30px;-webkit-text-stroke:0.5px #d2d2e0">Tire Scans Overview</span>
<span style="left:614.5px;top:255.5px;font-size:16.5px;line-height:21px;color:#a0a1af;letter-spacing:0.57px;font-style:italic">(2 panels)</span>
<span style="left:365.0px;top:299.8px;font-size:23.2px;line-height:30px;color:#d2d2e0;letter-spacing:0.55px;-webkit-text-stroke:0.5px #d2d2e0">Tire Statistics</span>
<span style="left:535.0px;top:307.5px;font-size:16.5px;line-height:21px;color:#a0a1af;letter-spacing:0.62px;font-style:italic">(6 panels)</span>
<span style="left:365.0px;top:351.8px;font-size:23.2px;line-height:30px;color:#d2d2e0;letter-spacing:0.17px;-webkit-text-stroke:0.5px #d2d2e0">Tire Recall Status</span>
<span style="left:574.5px;top:359.5px;font-size:16.5px;line-height:21px;color:#a0a1af;letter-spacing:0.57px;font-style:italic">(3 panels)</span>
<span style="left:365.0px;top:403.8px;font-size:23.2px;line-height:30px;color:#d2d2e0;letter-spacing:0.24px;-webkit-text-stroke:0.5px #d2d2e0">Scan details</span>
<span style="left:346.3px;top:463.4px;font-size:19.3px;line-height:25px;color:#d8d8e6;letter-spacing:0.56px;-webkit-text-stroke:0.7px #d8d8e6">DOT/TIN details</span>
<span style="left:354.7px;top:516.0px;font-size:19.3px;line-height:25px;color:#d8d8e6;letter-spacing:-0.28px;-webkit-text-stroke:0.7px #d8d8e6">TIN</span>
<span style="left:745.7px;top:516.0px;font-size:19.3px;line-height:25px;color:#d8d8e6;letter-spacing:0.99px;-webkit-text-stroke:0.7px #d8d8e6">Tire production date</span>
<span style="left:1408.0px;top:516.0px;font-size:19.3px;line-height:25px;color:#d8d8e6;letter-spacing:0.57px;-webkit-text-stroke:0.7px #d8d8e6">Tire age</span>
<span style="left:1527.2px;top:516.0px;font-size:19.3px;line-height:25px;color:#d8d8e6;letter-spacing:1.46px;-webkit-text-stroke:0.7px #d8d8e6">country</span>
<span style="left:1917.7px;top:516.0px;font-size:19.3px;line-height:25px;color:#d8d8e6;letter-spacing:1.69px;-webkit-text-stroke:0.7px #d8d8e6">city</span>
<span style="left:2308.7px;top:516.0px;font-size:19.3px;line-height:25px;color:#d8d8e6;letter-spacing:0.69px;-webkit-text-stroke:0.7px #d8d8e6">Scan image</span>
<span style="left:2920.0px;top:516.0px;font-size:19.3px;line-height:25px;color:#d8d8e6;letter-spacing:0.84px;-webkit-text-stroke:0.7px #d8d8e6">Scan preview</span>
<span style="left:354.7px;top:559.5px;font-size:19.5px;line-height:25px;color:#d6d6e0;letter-spacing:0.11px">DOTAB1ABCD1A123</span>
<span style="left:745.7px;top:559.0px;font-size:19.8px;line-height:26px;color:#d6d6e4;letter-spacing:0.58px;-webkit-text-stroke:0.2px #d6d6e4">2015/04</span>
<span style="left:1497.5px;top:559.0px;font-size:19.8px;line-height:26px;color:#d6d6e4;letter-spacing:0.30px;-webkit-text-stroke:0.2px #d6d6e4">8</span>
<span style="left:1527.2px;top:559.0px;font-size:19.8px;line-height:26px;color:#d6d6e4;letter-spacing:0.58px;-webkit-text-stroke:0.2px #d6d6e4">United States of America</span>
<span style="left:1917.7px;top:559.0px;font-size:19.8px;line-height:26px;color:#d6d6e4;letter-spacing:0.71px;-webkit-text-stroke:0.2px #d6d6e4">Prescott</span>
<span style="left:2308.7px;top:559.0px;font-size:19.8px;line-height:26px;color:#6e9fff;letter-spacing:0.62px;-webkit-text-stroke:0.45px #6e9fff">link to image</span>
<span style="left:354.7px;top:608.5px;font-size:19.5px;line-height:25px;color:#d6d6e0;letter-spacing:0.10px">DOTBA1DCBA1A5432</span>
<span style="left:745.7px;top:608.0px;font-size:19.8px;line-height:26px;color:#d6d6e4;letter-spacing:0.58px;-webkit-text-stroke:0.2px #d6d6e4">2015/04</span>
<span style="left:1497.5px;top:608.0px;font-size:19.8px;line-height:26px;color:#d6d6e4;letter-spacing:0.30px;-webkit-text-stroke:0.2px #d6d6e4">8</span>
<span style="left:1527.2px;top:608.0px;font-size:19.8px;line-height:26px;color:#d6d6e4;letter-spacing:0.58px;-webkit-text-stroke:0.2px #d6d6e4">United States of America</span>
<span style="left:1917.7px;top:608.0px;font-size:19.8px;line-height:26px;color:#d6d6e4;letter-spacing:0.30px;-webkit-text-stroke:0.2px #d6d6e4">Lake Havasu City</span>
<span style="left:2308.7px;top:608.0px;font-size:19.8px;line-height:26px;color:#6e9fff;letter-spacing:0.62px;-webkit-text-stroke:0.45px #6e9fff">link to image</span>
<span style="left:354.7px;top:657.5px;font-size:19.5px;line-height:25px;color:#d6d6e0;letter-spacing:0.13px">DOTDEFG1A1234567</span>
<span style="left:745.7px;top:657.0px;font-size:19.8px;line-height:26px;color:#d6d6e4;letter-spacing:0.66px;-webkit-text-stroke:0.2px #d6d6e4">2016/08</span>
<span style="left:1497.5px;top:657.0px;font-size:19.8px;line-height:26px;color:#d6d6e4;letter-spacing:0.30px;-webkit-text-stroke:0.2px #d6d6e4">7</span>
<span style="left:1527.2px;top:657.0px;font-size:19.8px;line-height:26px;color:#d6d6e4;letter-spacing:0.58px;-webkit-text-stroke:0.2px #d6d6e4">United States of America</span>
<span style="left:1917.7px;top:657.0px;font-size:19.8px;line-height:26px;color:#d6d6e4;letter-spacing:0.47px;-webkit-text-stroke:0.2px #d6d6e4">Los Angeles</span>
<span style="left:2308.7px;top:657.0px;font-size:19.8px;line-height:26px;color:#6e9fff;letter-spacing:0.62px;-webkit-text-stroke:0.45px #6e9fff">link to image</span>
<span style="left:346.3px;top:738.4px;font-size:19.3px;line-height:25px;color:#d8d8e6;letter-spacing:0.69px;-webkit-text-stroke:0.7px #d8d8e6">Tire Size details</span>
<span style="left:354.7px;top:791.0px;font-size:19.3px;line-height:25px;color:#d8d8e6;letter-spacing:0.58px;-webkit-text-stroke:0.7px #d8d8e6">Tire Size</span>
<span style="left:582.2px;top:791.0px;font-size:19.3px;line-height:25px;color:#d8d8e6;letter-spacing:1.30px;-webkit-text-stroke:0.7px #d8d8e6">Width</span>
<span style="left:810.2px;top:791.0px;font-size:19.3px;line-height:25px;color:#d8d8e6;letter-spacing:0.83px;-webkit-text-stroke:0.7px #d8d8e6">Diameter</span>
<span style="left:1038.2px;top:791.0px;font-size:19.3px;line-height:25px;color:#d8d8e6;letter-spacing:0.50px;-webkit-text-stroke:0.7px #d8d8e6">Ratio</span>
<span style="left:1266.2px;top:791.0px;font-size:19.3px;line-height:25px;color:#d8d8e6;letter-spacing:1.07px;-webkit-text-stroke:0.7px #d8d8e6">Construction</span>
<span style="left:1494.2px;top:791.0px;font-size:19.3px;line-height:25px;color:#d8d8e6;letter-spacing:0.56px;-webkit-text-stroke:0.7px #d8d8e6">Load Index</span>
<span style="left:1722.7px;top:791.0px;font-size:19.3px;line-height:25px;color:#d8d8e6;letter-spacing:0.65px;-webkit-text-stroke:0.7px #d8d8e6">Speed Rating</span>
<span style="left:1950.7px;top:791.0px;font-size:19.3px;line-height:25px;color:#d8d8e6;letter-spacing:0.96px;-webkit-text-stroke:0.7px #d8d8e6">Vehicle Type</span>
<span style="left:2178.7px;top:791.0px;font-size:19.3px;line-height:25px;color:#d8d8e6;letter-spacing:1.06px;-webkit-text-stroke:0.7px #d8d8e6">Winter</span>
<span style="left:2406.7px;top:791.0px;font-size:19.3px;line-height:25px;color:#d8d8e6;letter-spacing:0.89px;-webkit-text-stroke:0.7px #d8d8e6">Time of scan</span>
<span style="left:2634.7px;top:791.0px;font-size:19.3px;line-height:25px;color:#d8d8e6;letter-spacing:0.69px;-webkit-text-stroke:0.7px #d8d8e6">Scan image</span>
<span style="left:2919.5px;top:791.0px;font-size:19.3px;line-height:25px;color:#d8d8e6;letter-spacing:0.69px;-webkit-text-stroke:0.7px #d8d8e6">Scan Preview</span>
<span style="left:354.7px;top:833.5px;font-size:19.8px;line-height:26px;color:#d6d6e4;letter-spacing:0.30px;-webkit-text-stroke:0.2px #d6d6e4">255/75 R15</span>
<span style="left:582.2px;top:833.5px;font-size:19.8px;line-height:26px;color:#d6d6e4;letter-spacing:0.30px;-webkit-text-stroke:0.2px #d6d6e4">255</span>
<span style="left:810.2px;top:833.5px;font-size:19.8px;line-height:26px;color:#d6d6e4;letter-spacing:0.30px;-webkit-text-stroke:0.2px #d6d6e4">15</span>
<span style="left:1038.2px;top:833.5px;font-size:19.8px;line-height:26px;color:#d6d6e4;letter-spacing:0.30px;-webkit-text-stroke:0.2px #d6d6e4">75</span>
<span style="left:1266.2px;top:833.5px;font-size:19.8px;line-height:26px;color:#d6d6e4;letter-spacing:0.30px;-webkit-text-stroke:0.2px #d6d6e4">R</span>
<span style="left:2406.7px;top:833.5px;font-size:19.8px;line-height:26px;color:#d6d6e4;letter-spacing:0.70px;-webkit-text-stroke:0.2px #d6d6e4">2023-12-28T02:38:...</span>
<span style="left:2634.7px;top:833.5px;font-size:19.8px;line-height:26px;color:#6e9fff;letter-spacing:0.62px;-webkit-text-stroke:0.45px #6e9fff">link to image</span>
<span style="left:354.7px;top:883.0px;font-size:19.8px;line-height:26px;color:#d6d6e4;letter-spacing:0.30px;-webkit-text-stroke:0.2px #d6d6e4">225/70 R16 91S</span>
<span style="left:582.2px;top:883.0px;font-size:19.8px;line-height:26px;color:#d6d6e4;letter-spacing:0.30px;-webkit-text-stroke:0.2px #d6d6e4">225</span>
<span style="left:810.2px;top:883.0px;font-size:19.8px;line-height:26px;color:#d6d6e4;letter-spacing:0.30px;-webkit-text-stroke:0.2px #d6d6e4">16</span>
<span style="left:1038.2px;top:883.0px;font-size:19.8px;line-height:26px;color:#d6d6e4;letter-spacing:0.30px;-webkit-text-stroke:0.2px #d6d6e4">70</span>
<span style="left:1266.2px;top:883.0px;font-size:19.8px;line-height:26px;color:#d6d6e4;letter-spacing:0.30px;-webkit-text-stroke:0.2px #d6d6e4">R</span>
<span style="left:1494.2px;top:883.0px;font-size:19.8px;line-height:26px;color:#d6d6e4;letter-spacing:0.30px;-webkit-text-stroke:0.2px #d6d6e4">91</span>
<span style="left:1722.7px;top:883.0px;font-size:19.8px;line-height:26px;color:#d6d6e4;letter-spacing:0.30px;-webkit-text-stroke:0.2px #d6d6e4">S</span>
<span style="left:1950.7px;top:883.0px;font-size:19.8px;line-height:26px;color:#d6d6e4;letter-spacing:0.30px;-webkit-text-stroke:0.2px #d6d6e4">P</span>
<span style="left:2406.7px;top:883.0px;font-size:19.8px;line-height:26px;color:#d6d6e4;letter-spacing:0.56px;-webkit-text-stroke:0.2px #d6d6e4">2023-12-28T01:38:3...</span>
<span style="left:2634.7px;top:883.0px;font-size:19.8px;line-height:26px;color:#6e9fff;letter-spacing:0.62px;-webkit-text-stroke:0.45px #6e9fff">link to image</span>
<span style="left:354.7px;top:932.0px;font-size:19.8px;line-height:26px;color:#d6d6e4;letter-spacing:0.30px;-webkit-text-stroke:0.2px #d6d6e4">225/70 R16 91S</span>
<span style="left:582.2px;top:932.0px;font-size:19.8px;line-height:26px;color:#d6d6e4;letter-spacing:0.30px;-webkit-text-stroke:0.2px #d6d6e4">225</span>
<span style="left:810.2px;top:932.0px;font-size:19.8px;line-height:26px;color:#d6d6e4;letter-spacing:0.30px;-webkit-text-stroke:0.2px #d6d6e4">16</span>
<span style="left:1038.2px;top:932.0px;font-size:19.8px;line-height:26px;color:#d6d6e4;letter-spacing:0.30px;-webkit-text-stroke:0.2px #d6d6e4">70</span>
<span style="left:1266.2px;top:932.0px;font-size:19.8px;line-height:26px;color:#d6d6e4;letter-spacing:0.30px;-webkit-text-stroke:0.2px #d6d6e4">R</span>
<span style="left:1494.2px;top:932.0px;font-size:19.8px;line-height:26px;color:#d6d6e4;letter-spacing:0.30px;-webkit-text-stroke:0.2px #d6d6e4">91</span>
<span style="left:1722.7px;top:932.0px;font-size:19.8px;line-height:26px;color:#d6d6e4;letter-spacing:0.30px;-webkit-text-stroke:0.2px #d6d6e4">S</span>
<span style="left:1950.7px;top:932.0px;font-size:19.8px;line-height:26px;color:#d6d6e4;letter-spacing:0.30px;-webkit-text-stroke:0.2px #d6d6e4">P</span>
<span style="left:2406.7px;top:932.0px;font-size:19.8px;line-height:26px;color:#d6d6e4;letter-spacing:0.56px;-webkit-text-stroke:0.2px #d6d6e4">2023-12-28T01:33:3...</span>
<span style="left:2634.7px;top:932.0px;font-size:19.8px;line-height:26px;color:#6e9fff;letter-spacing:0.62px;-webkit-text-stroke:0.45px #6e9fff">link to image</span>
<span style="left:346.3px;top:991.4px;font-size:19.3px;line-height:25px;color:#d8d8e6;letter-spacing:0.82px;-webkit-text-stroke:0.7px #d8d8e6">Commercial Tire details</span>
<span style="left:354.7px;top:1043.6px;font-size:19.3px;line-height:25px;color:#d8d8e6;letter-spacing:0.68px;-webkit-text-stroke:0.7px #d8d8e6">Commercial Tire ID</span>
<span style="left:810.2px;top:1043.6px;font-size:19.3px;line-height:25px;color:#d8d8e6;letter-spacing:0.89px;-webkit-text-stroke:0.7px #d8d8e6">Time of scan</span>
<span style="left:1266.2px;top:1043.6px;font-size:19.3px;line-height:25px;color:#d8d8e6;letter-spacing:1.08px;-webkit-text-stroke:0.7px #d8d8e6">Country</span>
<span style="left:1722.2px;top:1043.6px;font-size:19.3px;line-height:25px;color:#d8d8e6;letter-spacing:1.43px;-webkit-text-stroke:0.7px #d8d8e6">City</span>
<span style="left:2178.2px;top:1043.6px;font-size:19.3px;line-height:25px;color:#d8d8e6;letter-spacing:0.69px;-webkit-text-stroke:0.7px #d8d8e6">Scan image</span>
<span style="left:2919.5px;top:1043.6px;font-size:19.3px;line-height:25px;color:#d8d8e6;letter-spacing:0.69px;-webkit-text-stroke:0.7px #d8d8e6">Scan Preview</span>
<span style="left:354.7px;top:1088.5px;font-size:19.5px;line-height:25px;color:#d6d6e0;letter-spacing:0.11px">213243546</span>
<span style="left:810.2px;top:1087.0px;font-size:19.8px;line-height:26px;color:#d6d6e4;letter-spacing:0.38px;-webkit-text-stroke:0.2px #d6d6e4">2023-12-29T16:24:15.631Z</span>
<span style="left:1266.2px;top:1087.0px;font-size:19.8px;line-height:26px;color:#d6d6e4;letter-spacing:0.08px;-webkit-text-stroke:0.2px #d6d6e4">France</span>
<span style="left:1722.2px;top:1087.0px;font-size:19.8px;line-height:26px;color:#d6d6e4;letter-spacing:0.23px;-webkit-text-stroke:0.2px #d6d6e4">Paris</span>
<span style="left:2178.2px;top:1087.0px;font-size:19.8px;line-height:26px;color:#6e9fff;letter-spacing:0.62px;-webkit-text-stroke:0.45px #6e9fff">link to image</span>
<span style="left:354.7px;top:1137.0px;font-size:19.5px;line-height:25px;color:#d6d6e0;letter-spacing:0.17px">5432165432</span>
<span style="left:810.2px;top:1136.0px;font-size:19.8px;line-height:26px;color:#d6d6e4;letter-spacing:0.64px;-webkit-text-stroke:0.2px #d6d6e4">2023-12-29T16:22:53.093Z</span>
<span style="left:1266.2px;top:1136.0px;font-size:19.8px;line-height:26px;color:#d6d6e4;letter-spacing:0.08px;-webkit-text-stroke:0.2px #d6d6e4">France</span>
<span style="left:1722.2px;top:1136.0px;font-size:19.8px;line-height:26px;color:#d6d6e4;letter-spacing:0.23px;-webkit-text-stroke:0.2px #d6d6e4">Paris</span>
<span style="left:2178.2px;top:1136.0px;font-size:19.8px;line-height:26px;color:#6e9fff;letter-spacing:0.62px;-webkit-text-stroke:0.45px #6e9fff">link to image</span>
<span style="left:354.7px;top:1184.0px;font-size:19.5px;line-height:25px;color:#d6d6e0;letter-spacing:0.12px">1234565432</span>
<span style="left:810.2px;top:1185.0px;font-size:19.8px;line-height:26px;color:#d6d6e4;letter-spacing:0.38px;-webkit-text-stroke:0.2px #d6d6e4">2023-12-29T16:19:57.688Z</span>
<span style="left:1266.2px;top:1185.0px;font-size:19.8px;line-height:26px;color:#d6d6e4;letter-spacing:0.08px;-webkit-text-stroke:0.2px #d6d6e4">France</span>
<span style="left:1722.2px;top:1185.0px;font-size:19.8px;line-height:26px;color:#d6d6e4;letter-spacing:0.23px;-webkit-text-stroke:0.2px #d6d6e4">Paris</span>
<span style="left:2178.2px;top:1185.0px;font-size:19.8px;line-height:26px;color:#6e9fff;letter-spacing:0.62px;-webkit-text-stroke:0.45px #6e9fff">link to image</span>
<span style="left:354.7px;top:1234.0px;font-size:19.5px;line-height:25px;color:#d6d6e0;letter-spacing:0.17px">65432123456</span>
<span style="left:810.2px;top:1234.5px;font-size:19.8px;line-height:26px;color:#d6d6e4;letter-spacing:0.53px;-webkit-text-stroke:0.2px #d6d6e4">2023-12-29T16:18:59.069Z</span>
<span style="left:1266.2px;top:1234.5px;font-size:19.8px;line-height:26px;color:#d6d6e4;letter-spacing:0.08px;-webkit-text-stroke:0.2px #d6d6e4">France</span>
<span style="left:1722.2px;top:1234.5px;font-size:19.8px;line-height:26px;color:#d6d6e4;letter-spacing:0.23px;-webkit-text-stroke:0.2px #d6d6e4">Paris</span>
<span style="left:2178.2px;top:1234.5px;font-size:19.8px;line-height:26px;color:#6e9fff;letter-spacing:0.62px;-webkit-text-stroke:0.45px #6e9fff">link to image</span>
<span style="left:346.3px;top:1316.4px;font-size:19.3px;line-height:25px;color:#d8d8e6;letter-spacing:0.79px;-webkit-text-stroke:0.7px #d8d8e6">Tire Sidewall details</span>
<span style="left:354.7px;top:1369.5px;font-size:19.3px;line-height:25px;color:#d8d8e6;letter-spacing:-0.28px;-webkit-text-stroke:0.7px #d8d8e6">TIN</span>
<span style="left:676.2px;top:1369.5px;font-size:19.3px;line-height:25px;color:#d8d8e6;letter-spacing:0.75px;-webkit-text-stroke:0.7px #d8d8e6">Tire Make</span>
<span style="left:998.2px;top:1369.5px;font-size:19.3px;line-height:25px;color:#d8d8e6;letter-spacing:0.90px;-webkit-text-stroke:0.7px #d8d8e6">Tire Model</span>
<span style="left:1320.2px;top:1369.5px;font-size:19.3px;line-height:25px;color:#d8d8e6;letter-spacing:0.58px;-webkit-text-stroke:0.7px #d8d8e6">Tire Size</span>
<span style="left:1641.2px;top:1369.5px;font-size:19.3px;line-height:25px;color:#d8d8e6;letter-spacing:0.89px;-webkit-text-stroke:0.7px #d8d8e6">Time of scan</span>
<span style="left:1963.2px;top:1369.5px;font-size:19.3px;line-height:25px;color:#d8d8e6;letter-spacing:0.91px;-webkit-text-stroke:0.7px #d8d8e6">Additional Tire Info</span>
<span style="left:2498.7px;top:1369.5px;font-size:19.3px;line-height:25px;color:#d8d8e6;letter-spacing:0.69px;-webkit-text-stroke:0.7px #d8d8e6">Scan image</span>
<span style="left:2909.0px;top:1369.5px;font-size:19.3px;line-height:25px;color:#d8d8e6;letter-spacing:0.88px;-webkit-text-stroke:0.7px #d8d8e6">Image preview</span>
<span style="left:354.7px;top:1412.5px;font-size:19.5px;line-height:25px;color:#d6d6e0;letter-spacing:0.11px">DOTAB1ABCD1A123</span>
<span style="left:676.2px;top:1412.0px;font-size:19.8px;line-height:26px;color:#d6d6e4;letter-spacing:-0.49px;-webkit-text-stroke:0.2px #d6d6e4">HANKOOK</span>
<span style="left:998.2px;top:1412.0px;font-size:19.8px;line-height:26px;color:#d6d6e4;letter-spacing:-0.80px;-webkit-text-stroke:0.2px #d6d6e4">KINERGY ECO</span>
<span style="left:1320.2px;top:1412.0px;font-size:19.8px;line-height:26px;color:#d6d6e4;letter-spacing:0.46px;-webkit-text-stroke:0.2px #d6d6e4">205/60 R16 92H</span>
<span style="left:1641.2px;top:1412.0px;font-size:19.8px;line-height:26px;color:#d6d6e4;letter-spacing:0.55px;-webkit-text-stroke:0.2px #d6d6e4">2023-12-29T16:06:21.439Z</span>
<span style="left:1964.0px;top:1412.2px;font-size:21.2px;line-height:28px;color:#d4d4e2;letter-spacing:-1.01px;font-family:'Liberation Mono', monospace;-webkit-text-stroke:0.35px #d4d4e2">[ { &quot;DR_ID&quot;: 214520, &quot;EAN&quot;: &quot;8808563358406&quot;…</span>
<span style="left:2498.7px;top:1412.0px;font-size:19.8px;line-height:26px;color:#6e9fff;letter-spacing:0.62px;-webkit-text-stroke:0.45px #6e9fff">link to image</span>
<span style="left:354.7px;top:1461.5px;font-size:19.5px;line-height:25px;color:#d6d6e0;letter-spacing:0.10px">DOTBA1DCBA1A5432</span>
<span style="left:676.2px;top:1461.0px;font-size:19.8px;line-height:26px;color:#d6d6e4;letter-spacing:-0.49px;-webkit-text-stroke:0.2px #d6d6e4">HANKOOK</span>
<span style="left:998.2px;top:1461.0px;font-size:19.8px;line-height:26px;color:#d6d6e4;letter-spacing:-0.80px;-webkit-text-stroke:0.2px #d6d6e4">KINERGY ECO</span>
<span style="left:1320.2px;top:1461.0px;font-size:19.8px;line-height:26px;color:#d6d6e4;letter-spacing:0.46px;-webkit-text-stroke:0.2px #d6d6e4">205/60 R16 92H</span>
<span style="left:1641.2px;top:1461.0px;font-size:19.8px;line-height:26px;color:#d6d6e4;letter-spacing:0.55px;-webkit-text-stroke:0.2px #d6d6e4">2023-12-29T16:06:01.434Z</span>
<span style="left:1964.0px;top:1461.2px;font-size:21.2px;line-height:28px;color:#d4d4e2;letter-spacing:-1.01px;font-family:'Liberation Mono', monospace;-webkit-text-stroke:0.35px #d4d4e2">[ { &quot;DR_ID&quot;: 214520, &quot;EAN&quot;: &quot;8808563358406&quot;…</span>
<span style="left:2498.7px;top:1461.0px;font-size:19.8px;line-height:26px;color:#6e9fff;letter-spacing:0.62px;-webkit-text-stroke:0.45px #6e9fff">link to image</span>
<span style="left:354.7px;top:1510.7px;font-size:19.5px;line-height:25px;color:#d6d6e0;letter-spacing:0.13px">DOTDEFG1A1234567</span>
<span style="left:676.2px;top:1510.2px;font-size:19.8px;line-height:26px;color:#d6d6e4;letter-spacing:-0.49px;-webkit-text-stroke:0.2px #d6d6e4">HANKOOK</span>
<span style="left:998.2px;top:1510.2px;font-size:19.8px;line-height:26px;color:#d6d6e4;letter-spacing:-0.80px;-webkit-text-stroke:0.2px #d6d6e4">KINERGY ECO</span>
<span style="left:1320.2px;top:1510.2px;font-size:19.8px;line-height:26px;color:#d6d6e4;letter-spacing:0.46px;-webkit-text-stroke:0.2px #d6d6e4">205/60 R16 92H</span>
<span style="left:1641.2px;top:1510.2px;font-size:19.8px;line-height:26px;color:#d6d6e4;letter-spacing:0.55px;-webkit-text-stroke:0.2px #d6d6e4">2023-12-29T16:05:37.646Z</span>
<span style="left:1964.0px;top:1510.4px;font-size:21.2px;line-height:28px;color:#d4d4e2;letter-spacing:-1.01px;font-family:'Liberation Mono', monospace;-webkit-text-stroke:0.35px #d4d4e2">[ { &quot;DR_ID&quot;: 214520, &quot;EAN&quot;: &quot;8808563358406&quot;…</span>
<span style="left:2498.7px;top:1510.2px;font-size:19.8px;line-height:26px;color:#6e9fff;letter-spacing:0.62px;-webkit-text-stroke:0.45px #6e9fff">link to image</span>
<span style="left:354.7px;top:1560.0px;font-size:19.5px;line-height:25px;color:#d6d6e0;letter-spacing:0.09px">DOTD1ABCD1234567</span>
<span style="left:676.2px;top:1559.5px;font-size:19.8px;line-height:26px;color:#d6d6e4;letter-spacing:-0.49px;-webkit-text-stroke:0.2px #d6d6e4">HANKOOK</span>
<span style="left:998.2px;top:1559.5px;font-size:19.8px;line-height:26px;color:#d6d6e4;letter-spacing:-0.80px;-webkit-text-stroke:0.2px #d6d6e4">KINERGY ECO</span>
<span style="left:1320.2px;top:1559.5px;font-size:19.8px;line-height:26px;color:#d6d6e4;letter-spacing:0.46px;-webkit-text-stroke:0.2px #d6d6e4">205/60 R16 92H</span>
<span style="left:1641.2px;top:1559.5px;font-size:19.8px;line-height:26px;color:#d6d6e4;letter-spacing:0.55px;-webkit-text-stroke:0.2px #d6d6e4">2023-12-29T16:05:14.480Z</span>
<span style="left:1964.0px;top:1559.7px;font-size:21.2px;line-height:28px;color:#d4d4e2;letter-spacing:-1.01px;font-family:'Liberation Mono', monospace;-webkit-text-stroke:0.35px #d4d4e2">[ { &quot;DR_ID&quot;: 214520, &quot;EAN&quot;: &quot;8808563358406&quot;…</span>
<span style="left:2498.7px;top:1559.5px;font-size:19.8px;line-height:26px;color:#6e9fff;letter-spacing:0.62px;-webkit-text-stroke:0.45px #6e9fff">link to image</span>
<svg style="left:0;top:0" width="3410" height="1585" viewBox="0 0 3410 1585"><rect x="312.25" y="5.15" width="2804.7999999999997" height="1576.7" rx="0.6" fill="none" stroke="#2a9bfc" stroke-width="5.3"/><rect x="310.6" y="449.5" width="2808.1" height="5.199999999999989" fill="#2a9bfc"/><rect x="310.6" y="724.8" width="2808.1" height="6.300000000000068" fill="#2a9bfc"/><rect x="310.6" y="975.8" width="2808.1" height="6.2000000000000455" fill="#2a9bfc"/><rect x="310.6" y="1302.8" width="2808.1" height="6.2000000000000455" fill="#2a9bfc"/><path d="M117.4 547H665" fill="none" stroke="#2a9bfc" stroke-width="3.3" stroke-linecap="round" stroke-dasharray="10.1 13.97"/><path d="M117.4 817.8H665" fill="none" stroke="#2a9bfc" stroke-width="3.3" stroke-linecap="round" stroke-dasharray="10.1 13.97"/><path d="M3277.5 1124.7H2070" fill="none" stroke="#2a9bfc" stroke-width="3.3" stroke-linecap="round" stroke-dasharray="10.1 13.97"/><path d="M3277.5 1444.7H2070" fill="none" stroke="#2a9bfc" stroke-width="3.3" stroke-linecap="round" stroke-dasharray="10.1 13.97"/><circle cx="665.5" cy="547" r="13.8" fill="#2a9bfc"/><circle cx="665.2" cy="817.8" r="13.8" fill="#2a9bfc"/><circle cx="2069.8" cy="1125" r="13.8" fill="#2a9bfc"/><circle cx="2070" cy="1444.6" r="13.8" fill="#2a9bfc"/></svg>
<span style="left:57.9px;top:500.9px;font-size:84px;line-height:84px;color:#00aeef;white-space:pre;-webkit-text-stroke:0.8px #00aeef;transform-origin:6.7px 0;transform:scaleX(1.0);clip-path:polygon(0 0,0.347em 0,0.347em 1em,0.246em 1em,0.246em 0.74em,0 0.74em)">1</span>
<div style="left:97.7px;top:562.6px;width:10.4px;height:10.4px;border-radius:50%;background:#00aeef"></div>
<span style="left:93.4px;top:513.7px;font-size:68px;line-height:68px;color:#00aeef;white-space:pre">.</span>
<span style="left:57.2px;top:771.7px;font-size:84px;line-height:84px;color:#00aeef;white-space:pre;-webkit-text-stroke:0.8px #00aeef;transform-origin:4.2px 0;transform:scaleX(1.04);">2</span>
<div style="left:111.7px;top:833.6px;width:10.4px;height:10.4px;border-radius:50%;background:#00aeef"></div>
<span style="left:107.4px;top:784.7px;font-size:68px;line-height:68px;color:#00aeef;white-space:pre">.</span>
<span style="left:3285.0px;top:1078.7px;font-size:84px;line-height:84px;color:#00aeef;white-space:pre;-webkit-text-stroke:0.8px #00aeef;transform-origin:3.4px 0;transform:scaleX(1.04);">3</span>
<div style="left:3337.5px;top:1140.4px;width:10.4px;height:10.4px;border-radius:50%;background:#00aeef"></div>
<span style="left:3333.2px;top:1091.5px;font-size:68px;line-height:68px;color:#00aeef;white-space:pre">.</span>
<span style="left:3285.5px;top:1399.5px;font-size:84px;line-height:84px;color:#00aeef;white-space:pre;-webkit-text-stroke:0.8px #00aeef;transform-origin:1.7px 0;transform:scaleX(1.01);">4</span>
<div style="left:3337.7px;top:1461.6px;width:10.4px;height:10.4px;border-radius:50%;background:#00aeef"></div>
<span style="left:3333.4px;top:1412.7px;font-size:68px;line-height:68px;color:#00aeef;white-space:pre">.</span>
</div></body></html>
